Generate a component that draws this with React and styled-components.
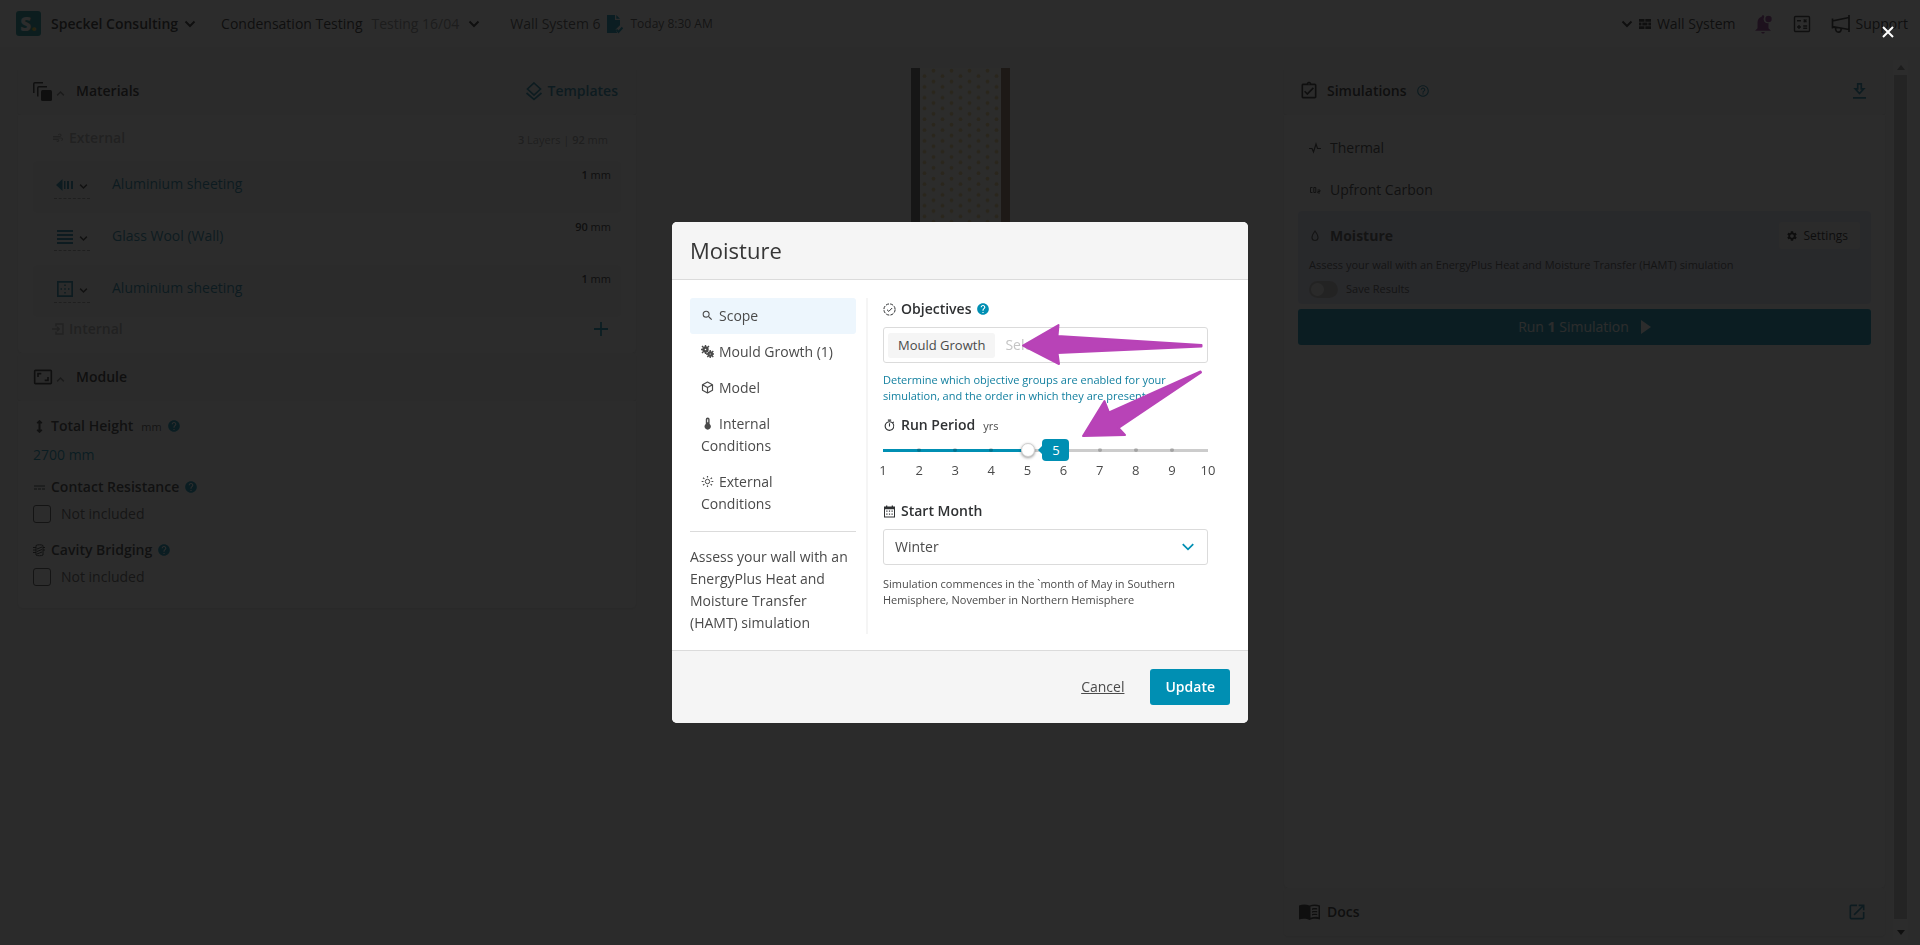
import React, { useState } from 'react';
import styled, { createGlobalStyle } from 'styled-components';
import {
  MdAir,
  MdAspectRatio,
  MdHelp,
  MdHelpOutline,
  MdOpenInNew,
  MdOutlineAssignmentTurnedIn,
  MdOutlineTimer,
  MdSearch,
  MdSettings
} from 'react-icons/md';
import { FaArrowsAltV } from 'react-icons/fa';

const colors = {
  primary: '#008fb3',
  link: '#117f9f',
  text: '#4a4a4a',
  strong: '#2f3133',
  border: '#dbdbdb',
  shade: '#f5f5f5',
  purple: '#b843b7'
};

const GlobalStyle = createGlobalStyle`
  *, *::before, *::after {
    box-sizing: border-box;
  }

  body {
    margin: 0;
    background: ${colors.shade};
    color: ${colors.text};
    font-family: 'Open Sans', 'Liberation Sans', sans-serif;
    font-size: 14px;
    line-height: 22px;
  }

  button, input, select {
    font: inherit;
    color: inherit;
  }

  svg {
    display: block;
    flex: none;
  }
`;

/* Shared pieces */

const PlainButton = styled.button`
  display: inline-flex;
  align-items: center;
  gap: ${p => p.$gap || 0}px;
  padding: 0;
  border: 0;
  background: none;
  color: ${p => p.$color || 'inherit'};
  font-weight: ${p => (p.$strong ? 600 : 400)};
  white-space: nowrap;
  cursor: pointer;
`;

const Row = styled.div`
  display: flex;
  align-items: center;
  gap: ${p => p.$gap || 0}px;
`;

const Small = styled.span`
  font-size: 12px;
`;

const Chevron = ({ size = 12, width = 2, up, color = 'currentColor' }) => (
  <svg width={size} height={size} viewBox="0 0 12 12" fill="none" stroke={color} strokeWidth={width}>
    <path d={up ? 'M1.5 8.5 6 4l4.5 4.5' : 'M1.5 3.5 6 8l4.5-4.5'} />
  </svg>
);

/* Icons */

const FileCheckIcon = () => (
  <svg width="18" height="20" viewBox="0 0 18 20" fill={colors.primary}>
    <path d="M1 1h8v5h5v5.2l-4.4 4.3 1.6 3.5H1zM10.3 1 14 4.8h-3.7z" />
    <path d="m10.5 15.5 2 2.5 4-4.5" fill="none" stroke={colors.primary} strokeWidth="2" />
  </svg>
);

const BricksIcon = () => (
  <svg width="12" height="12" viewBox="0 0 12 12" fill="currentColor">
    <path d="M0 1h5.500v2.800H0zM6.300 1H12v2.800H6.300zM0 4.600h2.500v2.800H0zM3.300 4.600h5.200v2.800H3.300zM9.300 4.600H12v2.800H9.300zM0 8.200h5.500V11H0zM6.300 8.200H12V11H6.300z" />
  </svg>
);

const BellIcon = () => (
  <svg width="18" height="20" viewBox="0 0 18 20" fill="#8a3089">
    <path d="M8 1.200c.6 0 1.200.4 1.200 1.100v.6A4 4 0 0 0 13.500 9v5.300L16 16.700H0l2.500-2.400V8.500c0-2.800 1.600-5 4.200-5.700v-.5c0-.7.6-1.100 1.300-1.100zM6.300 18h3.400c0 1-.8 1.500-1.700 1.500S6.300 19 6.300 18z" />
    <circle cx="13.500" cy="5" r="3.200" />
  </svg>
);

const CalculatorIcon = () => (
  <svg width="18" height="18" viewBox="0 0 18 18" fill="none" stroke="currentColor" strokeWidth="1.400">
    <rect x="1.500" y="1.500" width="15" height="15" rx="1" />
    <path d="M4 5.800h4M10.700 4.500l2.800 2.800M13.500 4.500l-2.800 2.800M4 12h4M6 10v4M10.200 11h4M10.200 13.200h4" />
  </svg>
);

const HornIcon = () => (
  <svg width="19" height="20" viewBox="0 0 19 20" fill="none" stroke="currentColor" strokeWidth="1.700">
    <path d="M18 1v17M18 3.500 1.500 7v5.500L18 15.500M1.500 4.500v10M4.500 13.200c-.3 3 1 5 3 5s3-1.800 2.500-4" />
  </svg>
);

const CopiesIcon = () => (
  <svg width="19" height="19" viewBox="0 0 19 19" fill="none" stroke="currentColor" strokeWidth="1.500">
    <path d="M.8 11V1.800q0-1 1-1H10M4.800 14.500V5.800q0-1 1-1H14" />
    <rect x="8" y="8" width="11" height="11" rx="1.500" fill="currentColor" stroke="none" />
  </svg>
);

const LayersIcon = () => (
  <svg width="18" height="20" viewBox="0 0 18 20" fill="none" stroke="currentColor" strokeWidth="1.700">
    <path d="m9 2 6.500 6L9 14 2.500 8zM1.500 12 9 18.500l7.500-6.500" />
  </svg>
);

const OutsideLayerIcon = () => (
  <svg width="18" height="18" viewBox="0 0 18 18" fill="currentColor">
    <path d="M6.500 3v12L0 9zM8 5h1.500v8H8zM11 5h2v8h-2zM15 5h2v8h-2z" />
  </svg>
);

const LinesIcon = () => (
  <svg width="18" height="18" viewBox="0 0 18 18" fill="currentColor">
    <path d="M1 2h16v2H1zM1 6h16v2H1zM1 10h16v2H1zM1 14h16v2H1z" />
  </svg>
);

const InsideLayerIcon = () => (
  <svg width="18" height="18" viewBox="0 0 18 18" fill="currentColor">
    <path d="M1 1h16v16H1zm1.700 1.700v12.600h12.600V2.700z" fillRule="evenodd" />
    <path d="M8.200 4.500h1.600V6H8.200zM8.200 8.200h1.600v1.600H8.200zM8.200 12h1.600v1.500H8.200zM4.500 8.200H6v1.600H4.500zM12 8.200h1.500v1.600H12z" />
  </svg>
);

const EnterIcon = () => (
  <svg width="12" height="12" viewBox="0 0 12 12" fill="none" stroke="currentColor" strokeWidth="1.400">
    <path d="M4 3.500V1h7v10H4V8.500M0 6h7M5 3.800 7.300 6 5 8.200" />
  </svg>
);

const PlusIcon = () => (
  <svg width="14" height="14" viewBox="0 0 14 14" stroke="currentColor" strokeWidth="1.800">
    <path d="M7 0v14M0 7h14" />
  </svg>
);

const DownloadIcon = () => (
  <svg width="15" height="18" viewBox="0 0 15 18" fill="none" stroke="currentColor" strokeWidth="1.700">
    <path d="M5.700 1.800h3.600v5h2.500l-4.300 4.700-4.300-4.700h2.500zM1 15.800h13" />
  </svg>
);

const ContactIcon = () => (
  <svg width="13" height="13" viewBox="0 0 13 13" stroke="currentColor" strokeWidth="1.200">
    <path d="M1 5h11M1 8h3M5 8h3M9 8h3" />
  </svg>
);

const CavityIcon = () => (
  <svg width="13" height="13" viewBox="0 0 13 13" fill="none" stroke="currentColor">
    <path d="M3 1.500C4 .5 9 .5 10 1.500v9.500c-1 1-6 1-7 0zM0 3.500h3M0 6h3M0 8.500h3M10 3.500h2M10 6h2M4 5l5-2M4 7.500l5-2M4 10l5-2" />
  </svg>
);

const PulseIcon = () => (
  <svg width="12" height="12" viewBox="0 0 12 12" fill="none" stroke="currentColor" strokeWidth="1.200">
    <path d="M0 6.500h3L4.500 10 7 2l1.500 4.500H12" />
  </svg>
);

const CarbonIcon = () => (
  <svg width="12" height="12" viewBox="0 0 12 12" fill="none" stroke="currentColor">
    <path d="M3.500 3.500h-2v5h2M4.800 3.500h2v5h-2zM8.500 6H11v1.500H8.800V9H11" />
  </svg>
);

const DropIcon = () => (
  <svg width="12" height="12" viewBox="0 0 12 12" fill="none" stroke="currentColor" strokeWidth="1.200">
    <path d="M6 1C4.500 3 3 5 3 7.500a3 3 0 0 0 6 0C9 5 7.500 3 6 1z" />
  </svg>
);

const PlayIcon = () => (
  <svg width="10" height="14" viewBox="0 0 10 14" fill="currentColor">
    <path d="m0 0 10 7-10 7z" />
  </svg>
);

const BookIcon = () => (
  <svg width="21" height="16" viewBox="0 0 21 16" fill="currentColor">
    <path d="M0 1.500C3 .2 7.500.2 10.500 1.500 13.500.2 18 .2 21 1.500v14c-3-1-7.500-1-10.500.5C7.500 14.500 3 14.500 0 15.500zm11.500 1v11.300c2.500-1 5.500-1.200 8-.6V2.600c-2.500-.8-5.500-.8-8-.1z" fillRule="evenodd" />
    <path d="M13 4.500c1.600-.5 3.600-.5 5.200-.2v1.300c-1.600-.3-3.600-.2-5.200.3zM13 7.300c1.600-.5 3.600-.5 5.200-.2v1.300c-1.600-.3-3.600-.2-5.200.3zM13 10.100c1.600-.5 3.600-.5 5.200-.2v1.300c-1.600-.3-3.600-.2-5.200.3z" />
  </svg>
);

const MouldIcon = () => (
  <svg width="13" height="13" viewBox="0 0 13 13" fill="none" stroke="currentColor">
    <circle cx="4.500" cy="4.500" r="2" strokeWidth="2.400" />
    <path d="M4.500 0v2M0 4.500h2M1 1l1.500 1.500M8 1 6.500 2.500M1 8l1.500-1.500M4.500 9V7" strokeWidth="1.400" />
    <circle cx="9.200" cy="9" r="1.700" strokeWidth="2.200" />
    <path d="M9.200 5v2M9.200 13v-2M5 9h2M13 9h-2M12.300 6l-1.500 1.500M6.300 12l1.500-1.500M12.300 12l-1.500-1.500" strokeWidth="1.400" />
  </svg>
);

const CubeIcon = () => (
  <svg width="13" height="13" viewBox="0 0 13 13" fill="none" stroke="currentColor" strokeWidth="1.200" strokeLinejoin="round">
    <path d="m6.500 1 5 2.700v5.600l-5 2.700-5-2.700V3.700zM1.500 3.700l5 2.800 5-2.800M6.500 6.500V12" />
  </svg>
);

const ThermometerIcon = () => (
  <svg width="13" height="13" viewBox="0 0 13 13" fill="currentColor">
    <path d="M4.800 2.300a1.900 1.900 0 0 1 3.800 0v4.600a3.200 3.200 0 1 1-3.800 0zM6.200 2.300v3h1v-3z" fillRule="evenodd" />
  </svg>
);

const SunIcon = () => (
  <svg width="13" height="13" viewBox="0 0 13 13" fill="none" stroke="currentColor">
    <circle cx="6.500" cy="6.500" r="2.200" />
    <path d="M6.500 1v1.500M6.500 10.500V12M.7 6.500h1.800M10.500 6.500h1.800M2 2.800l1.400 1.100M11 2.800 9.600 3.900M2 10.200l1.400-1.100M11 10.200 9.600 9.100" strokeWidth="1.200" />
  </svg>
);

const ObjectiveIcon = () => (
  <svg width="13" height="13" viewBox="0 0 13 13" fill="none" stroke="currentColor">
    <circle cx="6.500" cy="6.500" r="5.600" strokeDasharray="3.200 1.200" />
    <path d="m4 6.700 1.800 1.700L9.200 5" />
  </svg>
);

const CalendarIcon = () => (
  <svg width="13" height="13" viewBox="0 0 13 13" fill="currentColor">
    <path d="M1 1.500h2V.5h1.300v1h4.400v-1H10v1h2v11H1zm1 2.800v7.200h9V4.300z" fillRule="evenodd" />
    <path d="M3.300 5.500h1.200v1.200H3.300zM5.900 5.500h1.200v1.200H5.900zM8.500 5.500h1.200v1.200H8.500zM3.300 8.500h1.200v1.200H3.300zM5.900 8.500h1.200v1.200H5.900zM8.500 8.500h1.200v1.200H8.500z" />
  </svg>
);

/* Top bar */

const TopBar = styled.header`
  display: flex;
  align-items: center;
  height: 47px;
  padding: 0 12px 0 16px;
  background: #fff;
`;

const Logo = styled.a`
  display: flex;
  align-items: center;
  justify-content: center;
  width: 25px;
  height: 25px;
  margin-right: 10px;
  border-radius: 3px;
  background: #0a8f94;
  color: #fff;
  font-size: 19px;
  font-weight: 800;
  text-decoration: none;

  i {
    color: #e6c229;
    font-style: normal;
  }
`;

const Crumb = styled(PlainButton)`
  margin-right: ${p => p.$space}px;
  color: #222;
`;

const Muted = styled.span`
  color: #888;
`;

const TopActions = styled(Row)`
  margin-left: auto;
  color: #222;
`;

/* Workspace */

const Page = styled.div`
  display: flex;
  flex-direction: column;
  height: 100vh;
  overflow: hidden;
`;

const Workspace = styled.main`
  display: grid;
  grid-template-columns: 618fr 648fr 601fr 23px;
  flex: 1;
  min-height: 0;
  padding: 13px 12px 5px 18px;
`;

const Column = styled.section`
  display: flex;
  flex-direction: column;
  padding: 7px 0 4px;
`;

const PanelHead = styled.div`
  display: flex;
  align-items: center;
  height: 48px;
  padding: 0 18px 0 15px;
  border-radius: 4px;
  background: #f7f7f7;
  box-shadow: 0 1px 2px rgba(0, 0, 0, 0.1);
  color: #222;
`;

const PanelTitle = styled.h2`
  margin: 0 auto 0 ${p => p.$left}px;
  font-size: 14px;
  font-weight: 600;
`;

const Caret = styled.span`
  padding: 4px 0 0 ${p => p.$left}px;
`;

const Panel = styled.div`
  display: flex;
  flex-direction: column;
  flex: ${p => (p.$grow ? 1 : 'none')};
  padding: ${p => p.$pad};
  background: #fff;
  border-radius: 0 0 5px 5px;
  box-shadow: 0 1px 3px rgba(0, 0, 0, 0.1);
`;

const EdgeRow = styled.div`
  display: flex;
  align-items: center;
  gap: 5px;
  height: ${p => p.$height}px;
  padding: 0 13px 0 19px;
  color: #aaa;
`;

const EdgeName = styled.span`
  margin-right: auto;
  font-weight: 600;
`;

const LayerRow = styled.div`
  display: flex;
  height: 52px;
  padding: 0 10px 0 21px;
  border-radius: 4px;
  background: ${p => (p.$shaded ? '#f7f7f7' : 'transparent')};
`;

const LayerType = styled.button`
  display: flex;
  align-items: center;
  gap: 2px;
  width: 36px;
  height: 28px;
  margin-top: 10px;
  padding: 0 0 0 2px;
  border: 0;
  border-bottom: 1px dashed #999;
  background: none;
  color: ${colors.link};
`;

const LayerName = styled.a`
  margin: 12px auto 0 22px;
  color: ${colors.link};
  text-decoration: none;
`;

const Thickness = styled.span`
  margin-top: 3px;
  font-size: 11px;
  color: ${p => (p.$faded ? '#999' : '#222')};

  b {
    font-weight: 600;
  }
`;

const FieldLabel = styled.label`
  display: flex;
  align-items: center;
  gap: 5px;
  height: 22px;
  color: ${colors.strong};
  font-weight: 600;

  small {
    padding: 1px 0 0 3px;
    font-size: 11px;
    font-weight: 400;
    color: ${colors.text};
  }
`;

const HeightValue = styled.a`
  margin: 7px 0 10px;
  color: ${colors.primary};
  text-decoration: none;
`;

const CheckRow = styled.label`
  display: flex;
  align-items: center;
  gap: 10px;
  height: 22px;
  margin: 5px 0 14px;
  color: #555;
`;

const Checkbox = styled.input`
  appearance: none;
  width: 18px;
  height: 18px;
  margin: 0;
  border: 1px solid #444;
  border-radius: 3px;
`;

const WallDrawing = styled.svg`
  width: 100px;
  height: 560px;
  margin: 8px auto 0 275px;
`;

const Simulation = styled.button`
  display: flex;
  align-items: center;
  gap: 9px;
  height: 42px;
  padding: 0 11px;
  border: 0;
  background: none;
  color: #333;
  text-align: left;
`;

const Selected = styled.div`
  display: flex;
  flex-direction: column;
  margin: 0 0 5px;
  padding: 11px 11px 5px;
  border-radius: 4px;
  background: #e0e4f8;
`;

const SettingsButton = styled.button`
  display: flex;
  align-items: center;
  gap: 6px;
  height: 27px;
  margin-left: auto;
  padding: 0 12px 0 7px;
  border: 0;
  border-radius: 3px;
  background: #f5f5f5;
  color: #111;
  font-size: 12px;
`;

const Switch = styled.input`
  appearance: none;
  width: 29px;
  height: 17px;
  margin: 0;
  padding: 2px;
  border-radius: 9px;
  background: #bbb;

  &::before {
    content: '';
    display: block;
    width: 13px;
    height: 13px;
    border-radius: 50%;
    background: #eee;
  }
`;

const SwitchRow = styled.label`
  display: flex;
  align-items: center;
  gap: 8px;
  height: 20px;
  margin-top: 2px;
  font-size: 11px;
`;

const RunButton = styled.button`
  display: flex;
  align-items: center;
  justify-content: center;
  gap: 12px;
  height: 36px;
  border: 0;
  border-radius: 3px;
  background: ${colors.primary};
  color: #fff;
`;

const ScrollBar = styled.div`
  display: flex;
  flex-direction: column;
  align-items: center;
  justify-content: space-between;
  margin-left: 8px;
  width: 15px;
  background: #fafafa;
`;

const ScrollArrow = styled.div`
  margin: 5px 0;
  border: 4px solid transparent;
  border-top: ${p => (p.$up ? 0 : '5px solid #222')};
  border-bottom: ${p => (p.$up ? '5px solid #888' : 0)};
`;

const ScrollThumb = styled.div`
  flex: 1;
  width: 13px;
  margin-bottom: 6px;
  background: #c1c1c1;
`;

/* Dialog */

const Overlay = styled.div`
  position: fixed;
  inset: 0;
  display: flex;
  align-items: center;
  justify-content: center;
  background: rgba(13, 13, 13, 0.87);
`;

const CloseButton = styled.button`
  position: absolute;
  top: 20px;
  right: 20px;
  display: flex;
  padding: 6px;
  border: 0;
  background: none;
  color: #fff;
`;

const Dialog = styled.div`
  width: 576px;
  overflow: hidden;
  border-radius: 5px;
  background: #fff;
`;

const DialogHead = styled.header`
  padding: 13px 18px 14px;
  border-bottom: 1px solid ${colors.border};
  background: ${colors.shade};

  h1 {
    margin: 0;
    font-size: 22px;
    font-weight: 400;
    line-height: 30px;
    color: #363636;
  }
`;

const DialogBody = styled.div`
  display: flex;
  padding: 18px 40px 16px 18px;
`;

const Side = styled.div`
  width: 178px;
  padding-right: 10px;
  border-right: 2px solid ${colors.shade};
`;

const Nav = styled.nav`
  padding-bottom: 9px;
  border-bottom: 1px solid ${colors.border};
`;

const NavLink = styled.a`
  display: block;
  padding: 7px 18px 7px 11px;
  border-radius: 3px;
  background: ${p => (p.$active ? '#edf6fd' : 'transparent')};
  color: ${colors.text};
  text-decoration: none;

  svg {
    display: inline-block;
    margin-right: 5px;
    vertical-align: -1px;
  }
`;

const About = styled.p`
  margin: 14px 0 0;
`;

const Form = styled.form`
  position: relative;
  display: flex;
  flex: 1;
  flex-direction: column;
  min-width: 0;
  padding-left: 15px;
`;

const TagBox = styled.div`
  display: flex;
  align-items: center;
  height: 36px;
  margin-top: 7px;
  padding: 0 4px;
  border: 1px solid ${colors.border};
  border-radius: 3px;

  input {
    flex: 1;
    min-width: 0;
    padding: 0 10px;
    border: 0;
    outline: 0;
    background: none;
  }

  input::placeholder {
    color: #c4c4c4;
  }
`;

const Tag = styled.button`
  height: 25px;
  padding: 0 10px;
  border: 0;
  border-radius: 3px;
  background: ${colors.shade};
  font-size: 13px;
`;

const Hint = styled.p`
  margin: ${p => p.$margin};
  font-size: 11px;
  line-height: 16px;
  color: ${p => (p.$link ? colors.link : colors.text)};
`;

const Slider = styled.div`
  position: relative;
  height: 16px;
  margin: 6px 0 3px;
`;

const Range = styled.input`
  appearance: none;
  display: block;
  width: 100%;
  height: 16px;
  margin: 0;
  background: linear-gradient(
      to right,
      ${colors.primary} ${p => p.$percent}%,
      #ccc ${p => p.$percent}%
    )
    center / 100% 3px no-repeat;

  &::-webkit-slider-thumb {
    appearance: none;
    width: 14px;
    height: 14px;
    border: 1px solid #d0d0d0;
    border-radius: 50%;
    background: #fff;
    box-shadow: 0 1px 3px rgba(0, 0, 0, 0.4);
  }
`;

const Scale = styled.div`
  display: flex;
  justify-content: space-between;
  height: 18px;
  font-size: 13px;
  line-height: 18px;

  span {
    display: flex;
    justify-content: center;
    width: 0;
  }
`;

const Dots = styled(Scale)`
  position: absolute;
  inset: 6px 0 auto;
  height: 4px;
  pointer-events: none;
`;

const Dot = styled.i`
  flex: none;
  width: 4px;
  height: 4px;
  border-radius: 50%;
  background: ${p => (p.$hidden ? 'transparent' : 'rgba(0, 0, 0, 0.2)')};
`;

const Bubble = styled.output`
  position: absolute;
  top: -3px;
  left: calc(${p => p.$percent}% + 15px);
  width: 27px;
  height: 22px;
  border-radius: 4px;
  background: ${colors.primary};
  color: #fff;
  font-size: 13px;
  text-align: center;

  &::before {
    content: '';
    position: absolute;
    top: 7px;
    left: -4px;
    border: 4px solid transparent;
    border-left: 0;
    border-right-color: ${colors.primary};
  }
`;

const MonthBlock = styled.div`
  margin-top: 21px;
`;

const SelectBox = styled.div`
  display: grid;
  align-items: center;
  margin-top: 7px;

  select,
  svg {
    grid-area: 1 / 1;
  }

  select {
    appearance: none;
    height: 36px;
    padding: 0 11px;
    border: 1px solid ${colors.border};
    border-radius: 3px;
    background: #fff;
  }

  svg {
    z-index: 1;
    justify-self: end;
    margin-right: 13px;
    pointer-events: none;
  }
`;

const Arrows = styled.svg`
  position: absolute;
  top: -18px;
  left: -8px;
  width: 360px;
  height: 190px;
  pointer-events: none;
`;

const DialogFoot = styled.footer`
  display: flex;
  align-items: center;
  justify-content: flex-end;
  gap: 26px;
  padding: 18px;
  border-top: 1px solid ${colors.border};
  background: ${colors.shade};
`;

const CancelLink = styled.a`
  color: ${colors.text};
`;

const UpdateButton = styled.button`
  height: 36px;
  padding: 0 15px;
  border: 0;
  border-radius: 3px;
  background: ${colors.primary};
  color: #fff;
  font-weight: 600;
`;

const layers = [
  { name: 'Aluminium sheeting', mm: 1, icon: <OutsideLayerIcon /> },
  { name: 'Glass Wool (Wall)', mm: 90, icon: <LinesIcon /> },
  { name: 'Aluminium sheeting', mm: 1, icon: <InsideLayerIcon /> }
];

const navItems = [
  { label: 'Scope', icon: <MdSearch size={13} /> },
  { label: 'Mould Growth (1)', icon: <MouldIcon /> },
  { label: 'Model', icon: <CubeIcon /> },
  { label: 'Internal Conditions', icon: <ThermometerIcon /> },
  { label: 'External Conditions', icon: <SunIcon /> }
];

const years = [1, 2, 3, 4, 5, 6, 7, 8, 9, 10];

const Help = () => <MdHelp size={14} color={colors.primary} />;

const Header = () => (
  <TopBar>
    <Logo href="#" aria-label="Speckel">
      S<i>.</i>
    </Logo>
    <Crumb $gap={6} $space={25} $strong>
      Speckel Consulting <Chevron />
    </Crumb>
    <Crumb $gap={9} $space={30}>
      Condensation Testing <Muted>Testing 16/04</Muted> <Chevron />
    </Crumb>
    <Row $gap={6}>
      <span>Wall System 6</span>
      <FileCheckIcon />
      <Small>Today 8:30 AM</Small>
    </Row>
    <TopActions $gap={20}>
      <PlainButton $gap={6}>
        <Chevron /> <BricksIcon /> Wall System
      </PlainButton>
      <PlainButton aria-label="Notifications">
        <BellIcon />
      </PlainButton>
      <PlainButton aria-label="Calculator">
        <CalculatorIcon />
      </PlainButton>
      <PlainButton $gap={5}>
        <HornIcon /> Support
      </PlainButton>
    </TopActions>
  </TopBar>
);

const BuildUp = () => (
  <Column>
    <PanelHead>
      <CopiesIcon />
      <Caret $left={4}>
        <Chevron size={9} width={2} up color="#777" />
      </Caret>
      <PanelTitle $left={11}>Materials</PanelTitle>
      <PlainButton $gap={5} $color={colors.link} $strong>
        <LayersIcon /> Templates
      </PlainButton>
    </PanelHead>
    <Panel $pad="0 15px 12px">
      <EdgeRow $height={46}>
        <MdAir size={12} />
        <EdgeName>External</EdgeName>
        <Thickness $faded>
          <b>3</b> Layers | <b>92</b> mm
        </Thickness>
      </EdgeRow>
      {layers.map((layer, i) => (
        <LayerRow key={i} $shaded={i % 2 === 0}>
          <LayerType aria-label={`Type of layer ${i + 1}`}>
            {layer.icon}
            <Caret $left={3}>
              <Chevron size={9} width={2} color="#333" />
            </Caret>
          </LayerType>
          <LayerName href="#">{layer.name}</LayerName>
          <Thickness>
            <b>{layer.mm}</b> mm
          </Thickness>
        </LayerRow>
      ))}
      <EdgeRow $height={24}>
        <EnterIcon />
        <EdgeName>Internal</EdgeName>
        <PlainButton aria-label="Add layer" $color={colors.primary}>
          <PlusIcon />
        </PlainButton>
      </EdgeRow>
    </Panel>
    <PanelHead>
      <MdAspectRatio size={20} />
      <Caret $left={3}>
        <Chevron size={9} width={2} up color="#777" />
      </Caret>
      <PanelTitle $left={11}>Module</PanelTitle>
    </PanelHead>
    <Panel $pad="14px 15px 6px">
      <FieldLabel as="div">
        <FaArrowsAltV size={13} /> Total Height <small>mm</small> <Help />
      </FieldLabel>
      <HeightValue href="#">2700 mm</HeightValue>
      <FieldLabel as="div">
        <ContactIcon /> Contact Resistance <Help />
      </FieldLabel>
      <CheckRow>
        <Checkbox type="checkbox" /> Not included
      </CheckRow>
      <FieldLabel as="div">
        <CavityIcon /> Cavity Bridging <Help />
      </FieldLabel>
      <CheckRow>
        <Checkbox type="checkbox" /> Not included
      </CheckRow>
    </Panel>
  </Column>
);

const Wall = () => (
  <WallDrawing>
    <defs>
      <pattern id="wool" width="18" height="10.800" patternUnits="userSpaceOnUse" x="9" y="0">
        <circle cx="4.500" cy="8" r="1.900" fill="#e0b43c" fillOpacity=".6" />
        <circle cx="13.500" cy="2.700" r="1.900" fill="#e0b43c" fillOpacity=".6" />
      </pattern>
    </defs>
    <rect width="9" height="100%" fill="#5a5a5a" />
    <rect x="9" width="81" height="100%" fill="#fbfaf8" />
    <rect x="9" width="81" height="100%" fill="url(#wool)" />
    <rect x="90" width="9" height="100%" fill="#8a6c58" />
  </WallDrawing>
);

const Simulations = () => (
  <Column>
    <PanelHead>
      <MdOutlineAssignmentTurnedIn size={20} />
      <PanelTitle $left={8}>
        <Row $gap={9}>
          Simulations <MdHelpOutline size={14} color={colors.link} />
        </Row>
      </PanelTitle>
      <PlainButton aria-label="Download" $color={colors.link}>
        <DownloadIcon />
      </PlainButton>
    </PanelHead>
    <Panel $grow $pad="12px 14px 0">
      <Simulation>
        <PulseIcon /> Thermal
      </Simulation>
      <Simulation>
        <CarbonIcon /> Upfront Carbon
      </Simulation>
      <Selected>
        <Row $gap={9}>
          <DropIcon />
          <b>Moisture</b>
          <SettingsButton>
            <MdSettings size={12} /> Settings
          </SettingsButton>
        </Row>
        <Hint $margin="8px 0 4px">
          Assess your wall with an EnergyPlus Heat and Moisture Transfer (HAMT) simulation
        </Hint>
        <SwitchRow>
          <Switch type="checkbox" role="switch" /> Save Results
        </SwitchRow>
      </Selected>
      <RunButton>
        <span>
          Run <b>1</b> Simulation
        </span>
        <PlayIcon />
      </RunButton>
    </Panel>
    <PanelHead>
      <BookIcon />
      <PanelTitle $left={7}>Docs</PanelTitle>
      <PlainButton aria-label="Open docs" $color={colors.link}>
        <MdOpenInNew size={20} />
      </PlainButton>
    </PanelHead>
  </Column>
);

const MonthField = () => (
  <MonthBlock>
    <FieldLabel htmlFor="month">
      <CalendarIcon /> Start Month
    </FieldLabel>
    <SelectBox>
      <select id="month" defaultValue="Winter">
        <option>Winter</option>
        <option>Summer</option>
      </select>
      <Chevron size={14} width={1.5} color={colors.primary} />
    </SelectBox>
    <Hint $margin="11px 0 0">
      Simulation commences in the `month of May in Southern Hemisphere, November in Northern
      Hemisphere
    </Hint>
  </MonthBlock>
);

const PeriodField = () => {
  const [period, setPeriod] = useState(5);
  const percent = ((period - 1) / 9) * 100;

  return (
    <div>
      <FieldLabel htmlFor="period">
        <MdOutlineTimer size={13} /> Run Period <small>yrs</small>
      </FieldLabel>
      <Slider>
        <Range
          id="period"
          type="range"
          min="1"
          max="10"
          value={period}
          $percent={percent}
          onChange={e => setPeriod(Number(e.target.value))}
        />
        <Dots>
          {years.map(y => (
            <span key={y}>
              <Dot $hidden={y === 1 || y === 10 || y === period} />
            </span>
          ))}
        </Dots>
        <Bubble htmlFor="period" $percent={percent}>
          {period}
        </Bubble>
      </Slider>
      <Scale>
        {years.map(y => (
          <span key={y}>{y}</span>
        ))}
      </Scale>
    </div>
  );
};

const MoistureDialog = () => (
  <Dialog role="dialog" aria-labelledby="dialog-title">
    <DialogHead>
      <h1 id="dialog-title">Moisture</h1>
    </DialogHead>
    <DialogBody>
      <Side>
        <Nav>
          {navItems.map((item, i) => (
            <NavLink key={item.label} href="#" $active={i === 0}>
              {item.icon}
              {item.label}
            </NavLink>
          ))}
        </Nav>
        <About>
          Assess your wall with an EnergyPlus Heat and Moisture Transfer (HAMT) simulation
        </About>
      </Side>
      <Form>
        <FieldLabel htmlFor="objectives">
          <ObjectiveIcon /> Objectives <Help />
        </FieldLabel>
        <TagBox>
          <Tag type="button">Mould Growth</Tag>
          <input id="objectives" placeholder="Select" />
        </TagBox>
        <Hint $link $margin="9px 0 10px">
          Determine which objective groups are enabled for your simulation, and the order in
          which they are presented
        </Hint>
        <PeriodField />
        <MonthField />
        <Arrows
          viewBox="0 0 360 190"
          fill={colors.purple}
          stroke={colors.purple}
          strokeWidth="2"
          strokeLinejoin="round"
        >
          <path d="m163 65.500 35.500-20.500-1 11 144 9v1.500l-144 6.500 1.500 11z" />
          <path d="m223 156 21.500-35 4.500 11.500 91.500-41 .5 1-82.500 55.500 6.500 7z" />
        </Arrows>
      </Form>
    </DialogBody>
    <DialogFoot>
      <CancelLink href="#">Cancel</CancelLink>
      <UpdateButton>Update</UpdateButton>
    </DialogFoot>
  </Dialog>
);

const App = () => (
  <>
    <GlobalStyle />
    <Page>
      <Header />
      <Workspace>
        <BuildUp />
        <Wall />
        <Simulations />
        <ScrollBar>
          <ScrollArrow $up />
          <ScrollThumb />
          <ScrollArrow />
        </ScrollBar>
      </Workspace>
    </Page>
    <Overlay>
      <MoistureDialog />
      <CloseButton aria-label="Close">
        <svg width="12" height="12" viewBox="0 0 12 12" stroke="currentColor" strokeWidth="2">
          <path d="m1 1 10 10M11 1 1 11" />
        </svg>
      </CloseButton>
    </Overlay>
  </>
);

export default App;
